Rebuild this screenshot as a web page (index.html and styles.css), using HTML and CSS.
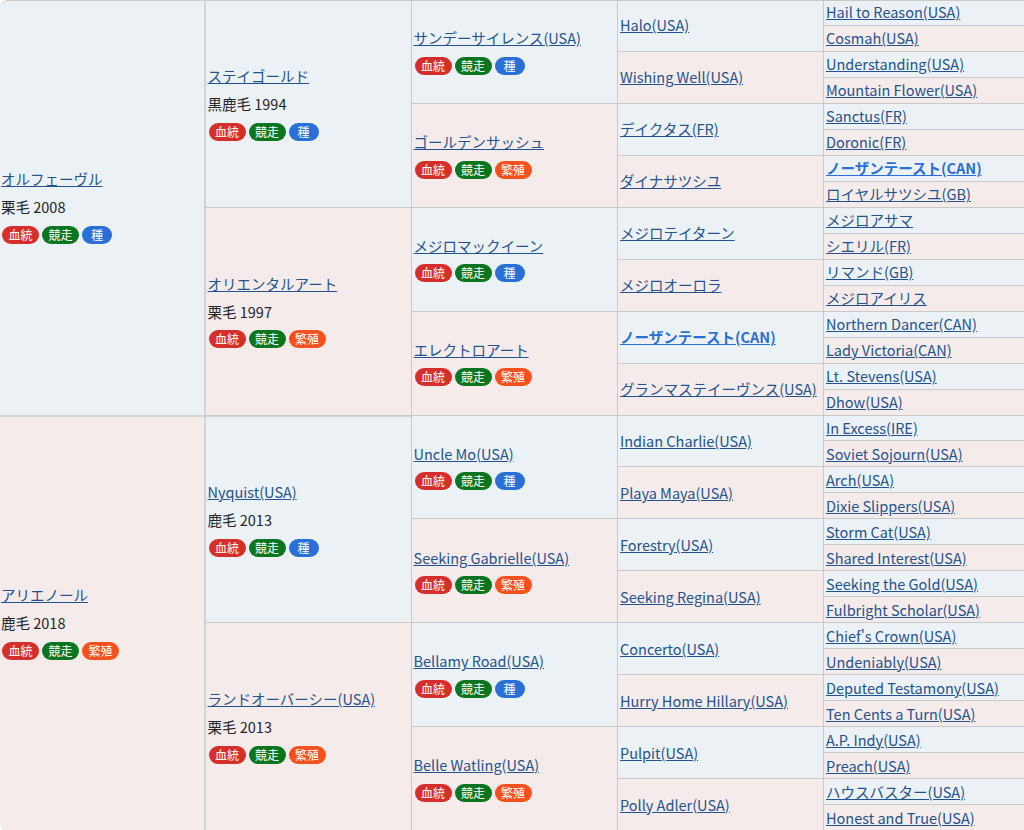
FILE: index.html
```html
<!DOCTYPE html>
<html lang="ja">
<head>
<meta charset="utf-8">
<title>血統表</title>
<link rel="stylesheet" href="styles.css">
</head>
<body>
<div class="ped">
<div class="c g1 s top"><a href="#">オルフェーヴル</a><p>栗毛 2008</p><div class="tags"><span class="t r">血統</span><span class="t g">競走</span><span class="t b">種</span></div></div>
<div class="c g2 s top"><a href="#">ステイゴールド</a><p>黒鹿毛 1994</p><div class="tags"><span class="t r">血統</span><span class="t g">競走</span><span class="t b">種</span></div></div>
<div class="c g3 s top"><a href="#">サンデーサイレンス(USA)</a><div class="tags"><span class="t r">血統</span><span class="t g">競走</span><span class="t b">種</span></div></div>
<div class="c g4 s top"><a href="#">Halo(USA)</a></div>
<div class="c g5 s top"><a href="#">Hail to Reason(USA)</a></div>
<div class="c g5 d"><a href="#">Cosmah(USA)</a></div>
<div class="c g4 d"><a href="#">Wishing Well(USA)</a></div>
<div class="c g5 s"><a href="#">Understanding(USA)</a></div>
<div class="c g5 d"><a href="#">Mountain Flower(USA)</a></div>
<div class="c g3 d"><a href="#">ゴールデンサッシュ</a><div class="tags"><span class="t r">血統</span><span class="t g">競走</span><span class="t o">繁殖</span></div></div>
<div class="c g4 s"><a href="#">デイクタス(FR)</a></div>
<div class="c g5 s"><a href="#">Sanctus(FR)</a></div>
<div class="c g5 d"><a href="#">Doronic(FR)</a></div>
<div class="c g4 d"><a href="#">ダイナサツシユ</a></div>
<div class="c g5 s"><a href="#" class="x">ノーザンテースト(CAN)</a></div>
<div class="c g5 d"><a href="#">ロイヤルサツシユ(GB)</a></div>
<div class="c g2 d"><a href="#">オリエンタルアート</a><p>栗毛 1997</p><div class="tags"><span class="t r">血統</span><span class="t g">競走</span><span class="t o">繁殖</span></div></div>
<div class="c g3 s"><a href="#">メジロマックイーン</a><div class="tags"><span class="t r">血統</span><span class="t g">競走</span><span class="t b">種</span></div></div>
<div class="c g4 s"><a href="#">メジロテイターン</a></div>
<div class="c g5 s"><a href="#">メジロアサマ</a></div>
<div class="c g5 d"><a href="#">シエリル(FR)</a></div>
<div class="c g4 d"><a href="#">メジロオーロラ</a></div>
<div class="c g5 s"><a href="#">リマンド(GB)</a></div>
<div class="c g5 d"><a href="#">メジロアイリス</a></div>
<div class="c g3 d"><a href="#">エレクトロアート</a><div class="tags"><span class="t r">血統</span><span class="t g">競走</span><span class="t o">繁殖</span></div></div>
<div class="c g4 s"><a href="#" class="x">ノーザンテースト(CAN)</a></div>
<div class="c g5 s"><a href="#">Northern Dancer(CAN)</a></div>
<div class="c g5 d"><a href="#">Lady Victoria(CAN)</a></div>
<div class="c g4 d"><a href="#">グランマステイーヴンス(USA)</a></div>
<div class="c g5 s"><a href="#">Lt. Stevens(USA)</a></div>
<div class="c g5 d"><a href="#">Dhow(USA)</a></div>
<div class="c g1 d mid"><a href="#">アリエノール</a><p>鹿毛 2018</p><div class="tags"><span class="t r">血統</span><span class="t g">競走</span><span class="t o">繁殖</span></div></div>
<div class="c g2 s mid"><a href="#">Nyquist(USA)</a><p>鹿毛 2013</p><div class="tags"><span class="t r">血統</span><span class="t g">競走</span><span class="t b">種</span></div></div>
<div class="c g3 s"><a href="#">Uncle Mo(USA)</a><div class="tags"><span class="t r">血統</span><span class="t g">競走</span><span class="t b">種</span></div></div>
<div class="c g4 s"><a href="#">Indian Charlie(USA)</a></div>
<div class="c g5 s"><a href="#">In Excess(IRE)</a></div>
<div class="c g5 d"><a href="#">Soviet Sojourn(USA)</a></div>
<div class="c g4 d"><a href="#">Playa Maya(USA)</a></div>
<div class="c g5 s"><a href="#">Arch(USA)</a></div>
<div class="c g5 d"><a href="#">Dixie Slippers(USA)</a></div>
<div class="c g3 d"><a href="#">Seeking Gabrielle(USA)</a><div class="tags"><span class="t r">血統</span><span class="t g">競走</span><span class="t o">繁殖</span></div></div>
<div class="c g4 s"><a href="#">Forestry(USA)</a></div>
<div class="c g5 s"><a href="#">Storm Cat(USA)</a></div>
<div class="c g5 d"><a href="#">Shared Interest(USA)</a></div>
<div class="c g4 d"><a href="#">Seeking Regina(USA)</a></div>
<div class="c g5 s"><a href="#">Seeking the Gold(USA)</a></div>
<div class="c g5 d"><a href="#">Fulbright Scholar(USA)</a></div>
<div class="c g2 d"><a href="#">ランドオーバーシー(USA)</a><p>栗毛 2013</p><div class="tags"><span class="t r">血統</span><span class="t g">競走</span><span class="t o">繁殖</span></div></div>
<div class="c g3 s"><a href="#">Bellamy Road(USA)</a><div class="tags"><span class="t r">血統</span><span class="t g">競走</span><span class="t b">種</span></div></div>
<div class="c g4 s"><a href="#">Concerto(USA)</a></div>
<div class="c g5 s"><a href="#">Chief's Crown(USA)</a></div>
<div class="c g5 d"><a href="#">Undeniably(USA)</a></div>
<div class="c g4 d"><a href="#">Hurry Home Hillary(USA)</a></div>
<div class="c g5 s"><a href="#">Deputed Testamony(USA)</a></div>
<div class="c g5 d"><a href="#">Ten Cents a Turn(USA)</a></div>
<div class="c g3 d"><a href="#">Belle Watling(USA)</a><div class="tags"><span class="t r">血統</span><span class="t g">競走</span><span class="t o">繁殖</span></div></div>
<div class="c g4 s"><a href="#">Pulpit(USA)</a></div>
<div class="c g5 s"><a href="#">A.P. Indy(USA)</a></div>
<div class="c g5 d"><a href="#">Preach(USA)</a></div>
<div class="c g4 d"><a href="#">Polly Adler(USA)</a></div>
<div class="c g5 s"><a href="#">ハウスバスター(USA)</a></div>
<div class="c g5 d"><a href="#">Honest and True(USA)</a></div>
</div>
</body>
</html>
```

FILE: styles.css
```css
html, body {
  margin: 0;
  padding: 0;
  background: #fff;
  height: 830px;
  overflow: hidden;
}
body {
  font-family: "Noto Sans CJK JP", "Noto Sans", sans-serif;
  font-size: 14.5px;
  line-height: 20px;
  color: #23262a;
}
.ped {
  display: grid;
  grid-template-columns: 204px 207px 206px 206px 1fr;
  grid-template-rows: repeat(32, 1fr);
  width: 1024px;
  height: 831px;
  border-radius: 8px 0 0 8px;
  overflow: hidden;
}
.c {
  display: flex;
  flex-direction: column;
  justify-content: center;
  align-items: flex-start;
  min-width: 0;
  padding: 0 2px;
  box-sizing: border-box;
  border-left: 1px solid #c9c9c9;
  border-bottom: 1px solid #c9c9c9;
  white-space: nowrap;
}
.g1 {
  grid-row: span 16;
  border-left: 0;
  padding: 0 0 2px 1px;
  border-bottom-color: #d3d3d6;
}
.g2 {
  grid-row: span 8;
  border-left: 2px solid #d3d3d6;
  padding-left: 1.5px;
}
.g3 {
  grid-row: span 4;
  padding-left: 1.5px;
}
.g4 { grid-row: span 2; }
.g5 { grid-row: span 1; }
.s { background: #ecf1f5; }
.d { background: #f5ebea; }
.top { box-shadow: inset 0 1px #c9c9c9; }
.g1.top { border-top-left-radius: 8px; }
.mid { border-top: 1px solid #d3d3d6; }
a {
  color: #23538f;
  text-decoration: underline;
}
a.x {
  color: #2a6fd6;
  font-weight: 700;
}
p {
  margin: 8px 0 0;
}
.tags {
  display: flex;
  gap: 3px;
  margin: 8.5px 0 0 1px;
}
.t {
  min-width: 30px;
  box-sizing: border-box;
  padding: 0 6.5px;
  height: 18px;
  line-height: 18px;
  border-radius: 9px;
  font-size: 12px;
  color: #fff;
  text-align: center;
}
.r { background: #d62f2b; }
.g { background: #0b761f; }
.b { background: #2a6fd6; }
.o { background: #f4511e; }
```
